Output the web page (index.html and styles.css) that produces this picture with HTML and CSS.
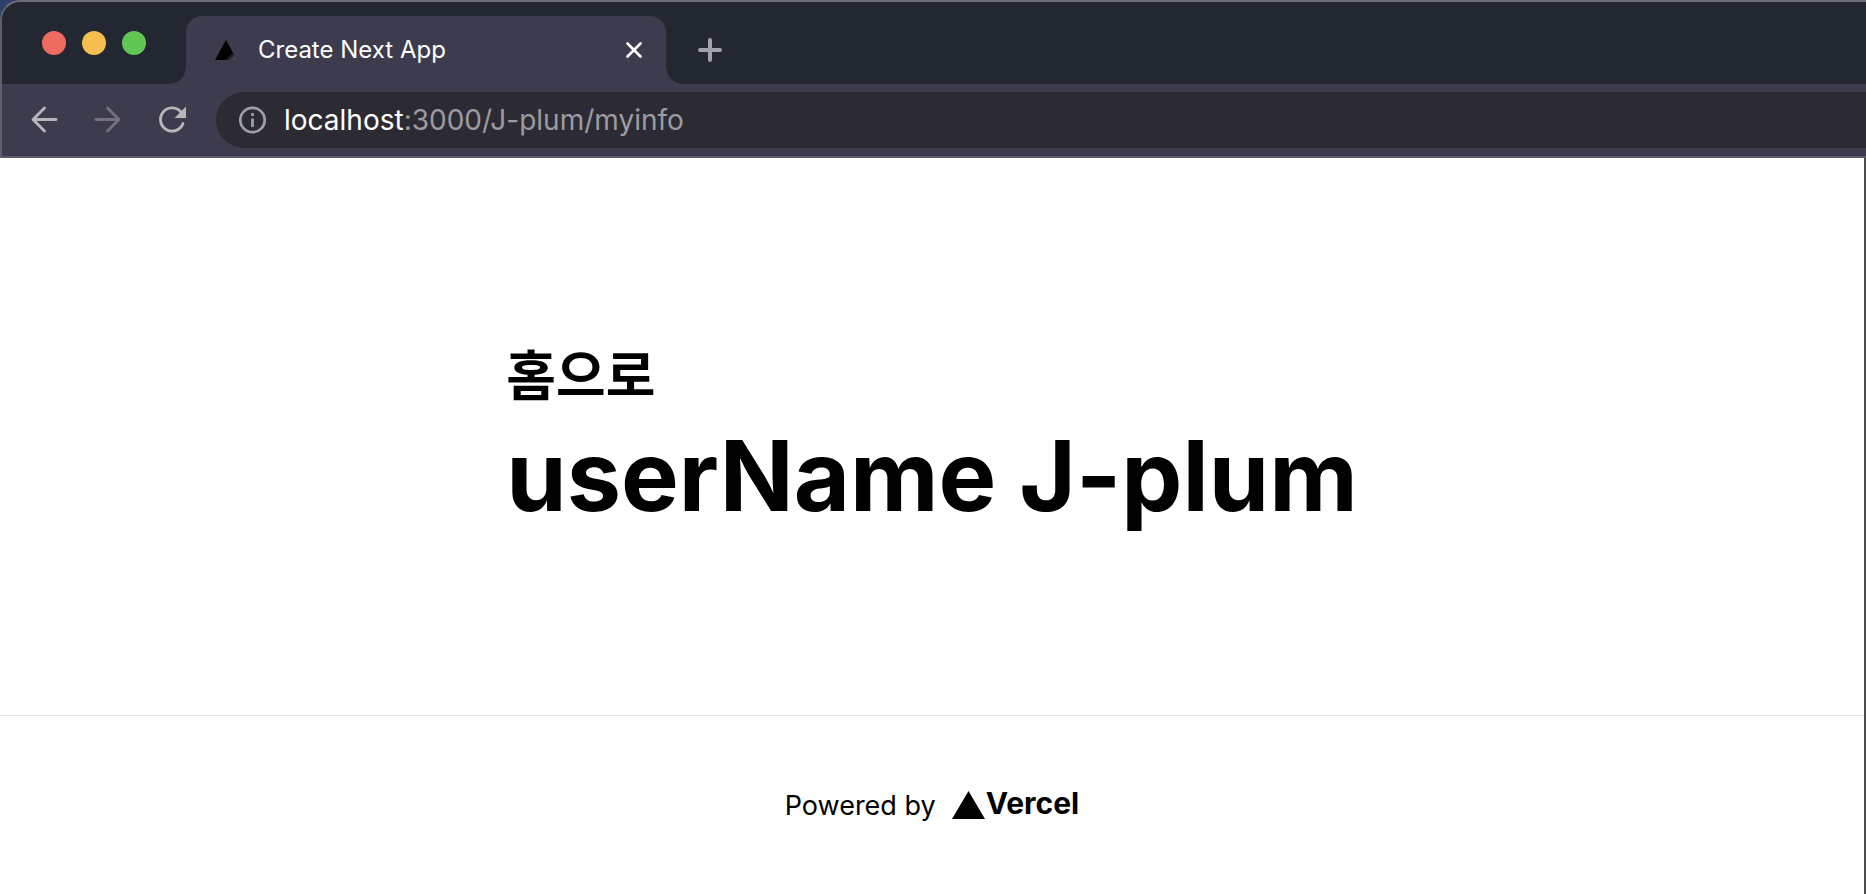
FILE: index.html
```html
<!DOCTYPE html>
<html lang="ko">
<head>
<meta charset="utf-8">
<title>Create Next App</title>
<link rel="stylesheet" href="styles.css">
</head>
<body>
<div class="window">
  <header class="chrome">
    <div class="tab-strip">
      <div class="lights">
        <button class="light light-close" aria-label="Close window"></button>
        <button class="light light-minimize" aria-label="Minimize window"></button>
        <button class="light light-zoom" aria-label="Zoom window"></button>
      </div>
      <div class="tab">
        <svg class="favicon" viewBox="0 0 22 20" aria-hidden="true">
          <defs><linearGradient id="shade" x1="0" y1="0" x2="1" y2="1"><stop offset=".68" stop-color="#000"/><stop offset=".9" stop-color="#4a4a4a"/></linearGradient></defs>
          <path d="M11 0 22 20H0z" fill="url(#shade)"/>
        </svg>
        <span class="tab-title">Create Next App</span>
        <button class="icon-button tab-close" aria-label="Close tab">
          <svg width="16" height="16" viewBox="0 0 16 16"><path d="M1.5 1.5l13 13M14.5 1.5l-13 13" stroke="#fff" stroke-width="2.6" stroke-linecap="round"/></svg>
        </button>
      </div>
      <button class="icon-button new-tab" aria-label="New tab">
        <svg width="24" height="24" viewBox="0 0 24 24"><path d="M12 2v20M2 12h20" stroke="#a3a1ad" stroke-width="4" stroke-linecap="round"/></svg>
      </button>
    </div>
    <div class="toolbar">
      <button class="icon-button" aria-label="Back">
        <svg width="28" height="28" viewBox="0 0 28 28" fill="none" stroke="#b9b7ba" stroke-width="2.8" stroke-linecap="round" stroke-linejoin="round"><path d="M26 13.5H3M14.5 2 3 13.5 14.5 25"/></svg>
      </button>
      <button class="icon-button" aria-label="Forward">
        <svg width="28" height="28" viewBox="0 0 28 28" fill="none" stroke="#74727f" stroke-width="2.8" stroke-linecap="round" stroke-linejoin="round"><path d="M2 13.5h23M13.5 2 25 13.5 13.5 25"/></svg>
      </button>
      <button class="icon-button" aria-label="Reload">
        <svg width="28" height="28" viewBox="0 0 28 28"><path d="M22.5 5.5A11.6 11.6 0 1 0 25 17.5" fill="none" stroke="#b9b7ba" stroke-width="2.8" stroke-linecap="round"/><path d="M28 .5V12H16.5z" fill="#b9b7ba"/></svg>
      </button>
      <div class="omnibox">
        <svg width="28" height="28" viewBox="0 0 28 28" fill="none" aria-hidden="true"><circle cx="13.5" cy="14" r="12.2" stroke="#9b9fa6" stroke-width="2.8"/><path d="M13.5 12.5V21M13.5 7v3" stroke="#9b9fa6" stroke-width="2.8"/></svg>
        <a class="address" href="#"><span class="host">localhost</span>:3000/J-plum/myinfo</a>
      </div>
    </div>
  </header>
  <div class="page">
    <main class="main">
      <div class="intro">
        <a class="home-link" href="#">홈으로</a>
        <h1 class="title">userName J-plum</h1>
      </div>
    </main>
    <footer class="footer">
      <a class="credit" href="#">
        <span>Powered by</span>
        <span class="brand">
          <svg width="33" height="28" viewBox="0 0 33 28" aria-hidden="true"><path d="M16.5 0 33 28H0z"/></svg>
          <span class="wordmark">Vercel</span>
        </span>
      </a>
    </footer>
  </div>
</div>
</body>
</html>
```
FILE: styles.css
```css
* {
  box-sizing: border-box;
}

body {
  margin: 0;
  background: #2e4068;
  font-family: Inter, "Noto Sans CJK KR", sans-serif;
}

a {
  color: inherit;
  text-decoration: none;
}

svg {
  display: block;
  flex: none;
}

.window {
  display: flex;
  flex-direction: column;
  min-height: 100vh;
}

.chrome {
  border-top: 2px solid #6c6f77;
  border-left: 2px solid #5e5f6b;
  border-radius: 20px 0 0 0;
  background: #232731;
  overflow: hidden;
}

.tab-strip {
  display: flex;
  height: 82px;
  padding-top: 14px;
}

.lights {
  display: flex;
  gap: 16px;
  width: 184px;
  padding: 15px 0 0 40px;
}

.light {
  width: 24px;
  height: 24px;
  padding: 0;
  border: 0;
  border-radius: 50%;
}

.light-close {
  background: #ed6b60;
}

.light-minimize {
  background: #f5bf4f;
}

.light-zoom {
  background: #62c655;
}

.tab {
  position: relative;
  display: flex;
  align-items: center;
  width: 480px;
  padding: 0 24px 0 29px;
  border-radius: 16px 16px 0 0;
  background: #3c3c4e;
}

/* Curved feet joining the tab to the toolbar */
.tab::before,
.tab::after {
  content: "";
  position: absolute;
  bottom: 0;
  width: 16px;
  height: 16px;
}

.tab::before {
  right: 100%;
  background: radial-gradient(circle at 0 0, transparent 15px, #3c3c4e 16px);
}

.tab::after {
  left: 100%;
  background: radial-gradient(circle at 100% 0, transparent 15px, #3c3c4e 16px);
}

.favicon {
  width: 22px;
  height: 20px;
}

.tab-title {
  flex: 1;
  margin-left: 21px;
  color: #fff;
  font-size: 24px;
  line-height: 32px;
}

.icon-button {
  padding: 0;
  border: 0;
  background: none;
}

.new-tab {
  margin: 0 32px;
}

.toolbar {
  display: flex;
  align-items: center;
  gap: 36px;
  height: 74px;
  padding-left: 28px;
  border-bottom: 2px solid #5a5a67;
  background: #3c3c4e;
}

.omnibox {
  display: flex;
  flex: 1;
  align-items: center;
  gap: 17px;
  height: 56px;
  margin-left: -6px;
  padding-left: 23px;
  border-radius: 28px 0 0 28px;
  background: #2c2b34;
}

.address {
  color: #9c9b9f;
  font-size: 28px;
  line-height: 36px;
}

.host {
  color: #fff;
}

.page {
  display: flex;
  flex: 1;
  flex-direction: column;
  border-right: 2px solid #4b4b4e;
  background: #fff;
  color: #000;
}

.main {
  display: flex;
  flex: 1;
  align-items: center;
  justify-content: center;
}

.intro {
  padding-top: 14px;
}

.home-link {
  display: block;
  font-size: 54px;
  font-weight: 700;
  line-height: 64px;
}

.title {
  margin: 0;
  font-size: 97px;
  font-weight: 700;
  line-height: 134px;
}

.footer {
  display: flex;
  justify-content: center;
  padding: 64px 0 62px;
  border-top: 1px solid #e4e4e4;
}

.credit {
  display: flex;
  align-items: center;
  gap: 16px;
  font-size: 27px;
  line-height: 52px;
}

.brand {
  display: flex;
  align-items: center;
  gap: 1px;
  padding-bottom: 3px;
}

.wordmark {
  font-size: 30px;
  font-weight: 700;
  line-height: 44px;
  padding-bottom: 4px;
}
```
